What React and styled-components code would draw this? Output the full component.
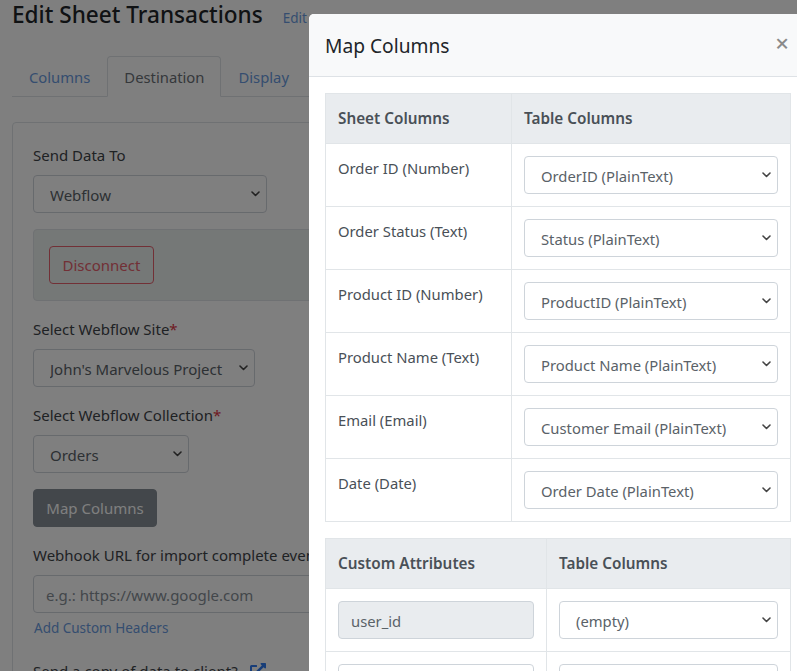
import React from "react";
import styled, { createGlobalStyle } from "styled-components";
import { FaExternalLinkAlt } from "react-icons/fa";

const chevron =
  "url(\"data:image/svg+xml,%3Csvg xmlns='http://www.w3.org/2000/svg' width='9' height='6' viewBox='0 0 9 6'%3E%3Cpath d='M1 1l3.5 3.5L8 1' fill='none' stroke='%23444' stroke-width='1.6' stroke-linecap='round' stroke-linejoin='round'/%3E%3C/svg%3E\")";

const GlobalStyle = createGlobalStyle`
  html, body {
    margin: 0;
    height: 100%;
    overflow: hidden;
    background: #fff;
  }
  body {
    font-family: "Noto Sans", "Open Sans", sans-serif;
    font-size: 15px;
    line-height: 24px;
    color: #3f4449;
  }
`;

const Page = styled.div`
  padding: 0 0 0 12px;
  width: 1100px;
`;

const TitleRow = styled.div`
  display: flex;
  align-items: baseline;
  gap: 20px;
  height: 29px;
`;

const Title = styled.h1`
  margin: 0;
  font-size: 22.6px;
  line-height: 29px;
  font-weight: 500;
  color: #212529;
`;

const SmallLink = styled.a`
  font-size: 13.5px;
  color: #6a9be0;
`;

const Tabs = styled.ul`
  display: flex;
  list-style: none;
  margin: 27px 0 25px;
  padding: 0;
  height: 41px;
  font-size: 14.8px;
  border-bottom: 1px solid #dee2e6;
  box-sizing: border-box;
`;

const Tab = styled.li`
  box-sizing: border-box;
  height: 41px;
  padding: 8px 16px;
  color: ${(p) => (p.$active ? "#6b7177" : "#6a9be0")};
  background: ${(p) => (p.$active ? "#fff" : "transparent")};
  border: 1px solid ${(p) => (p.$active ? "#dee2e6" : "transparent")};
  border-bottom-color: ${(p) => (p.$active ? "#fff" : "transparent")};
  border-radius: 4px 4px 0 0;
`;

const Card = styled.div`
  border: 1px solid #dee2e6;
  border-radius: 4px;
  padding: 21px 20px;
  display: flex;
  flex-direction: column;
  align-items: flex-start;
`;

const Label = styled.div`
  height: 24px;
  margin: ${(p) => p.$top || 0}px 0 7px;
  line-height: 22px;
  white-space: nowrap;
`;

const Required = styled.span`
  color: #dc3545;
`;

const Select = styled.select`
  appearance: none;
  box-sizing: border-box;
  display: block;
  width: ${(p) => (p.$width ? `${p.$width}px` : "100%")};
  height: 38px;
  padding: 2px 24px 0 16px;
  font: inherit;
  color: #5a6268;
  background: #fff ${chevron} no-repeat right 6px center;
  border: 1px solid #ced4da;
  border-radius: 4px;
`;

const Alert = styled.div`
  box-sizing: border-box;
  width: 800px;
  height: 72px;
  margin-top: 16px;
  padding: 16px 15px;
  background: #ebf0ee;
  border: 1px solid #dee2e6;
  border-radius: 4px;
`;

const OutlineButton = styled.button`
  box-sizing: border-box;
  height: 38px;
  width: 105px;
  padding: 0;
  font: inherit;
  color: #e4606d;
  background: transparent;
  border: 1px solid #e4606d;
  border-radius: 4px;
`;

const DarkButton = styled.button`
  box-sizing: border-box;
  height: 38px;
  width: 124px;
  margin-top: 16px;
  padding: 0;
  font: inherit;
  color: #fff;
  background: #868e96;
  border: 1px solid #868e96;
  border-radius: 4px;
`;

const Input = styled.input`
  box-sizing: border-box;
  display: block;
  width: ${(p) => (p.$width ? `${p.$width}px` : "100%")};
  height: 38px;
  padding: 1px 12px 0;
  font: inherit;
  color: #5a6268;
  background: ${(p) => (p.disabled ? "#e9ecef" : "#fff")};
  border: 1px solid #ced4da;
  border-radius: 4px;

  &::placeholder {
    color: #868e96;
  }
`;

const AddHeaders = styled(SmallLink)`
  display: block;
  margin: 4px 0 0 1px;
  line-height: 22px;
`;

const ClientRow = styled.div`
  display: flex;
  align-items: center;
  gap: 12px;
  margin-top: 20px;
  white-space: nowrap;
`;

const ClientIcon = styled(FaExternalLinkAlt)`
  color: #2f7bf0;
  width: 16px;
  height: 16px;
`;

const Backdrop = styled.div`
  position: fixed;
  inset: 0;
  background: rgba(0, 0, 0, 0.5);
`;

const Modal = styled.div`
  position: fixed;
  top: 14px;
  left: 309px;
  width: 498px;
  background: #fff;
  border-radius: 5px;
`;

const ModalHeader = styled.div`
  box-sizing: border-box;
  display: flex;
  justify-content: space-between;
  align-items: center;
  height: 63px;
  padding: 0 18px 0 16px;
  background: #f8f9fa;
  border-bottom: 1px solid #dee2e6;
  border-radius: 5px 5px 0 0;
`;

const ModalTitle = styled.h2`
  margin: 0;
  padding-top: 2px;
  font-size: 19.2px;
  font-weight: 400;
  line-height: 28px;
  color: #212529;
`;

const Close = styled.span`
  font-size: 24px;
  line-height: 22px;
  font-weight: 500;
  color: #8a8a8a;
  margin-top: -4px;
`;

const ModalBody = styled.div`
  padding: 16px 16px 16px;
  font-size: 14.8px;
`;

const Table = styled.table`
  width: 466px;
  table-layout: fixed;
  border-collapse: collapse;
  margin-bottom: 16px;
`;

const HeadCell = styled.th`
  box-sizing: border-box;
  height: 50px;
  width: ${(p) => (p.$width ? `${p.$width}px` : "auto")};
  padding: 11px 12px 13px;
  text-align: left;
  font-weight: 600;
  font-size: 15.3px;
  color: #495057;
  background: #e9ecef;
  border: 1px solid #e1e5e8;
`;

const Cell = styled.td`
  box-sizing: border-box;
  height: 63px;
  padding: 12px;
  vertical-align: top;
  color: #495057;
  border: 1px solid #e1e5e8;
  white-space: nowrap;
`;

const sheetRows = [
  ["Order ID (Number)", "OrderID (PlainText)"],
  ["Order Status (Text)", "Status (PlainText)"],
  ["Product ID (Number)", "ProductID (PlainText)"],
  ["Product Name (Text)", "Product Name (PlainText)"],
  ["Email (Email)", "Customer Email (PlainText)"],
  ["Date (Date)", "Order Date (PlainText)"],
];

const Choice = ({ value, width }) => (
  <Select $width={width} defaultValue={value}>
    <option>{value}</option>
  </Select>
);

export default function App() {
  return (
    <>
      <GlobalStyle />
      <Page>
        <TitleRow>
          <Title>Edit Sheet Transactions</Title>
          <SmallLink>Edit</SmallLink>
        </TitleRow>
        <Tabs>
          <Tab>Columns</Tab>
          <Tab $active>Destination</Tab>
          <Tab>Display</Tab>
        </Tabs>
        <Card>
          <Label>Send Data To</Label>
          <Choice value="Webflow" width={234} />
          <Alert>
            <OutlineButton>Disconnect</OutlineButton>
          </Alert>
          <Label $top={17}>
            Select Webflow Site<Required>*</Required>
          </Label>
          <Choice value="John's Marvelous Project" width={222} />
          <Label $top={17}>
            Select Webflow Collection<Required>*</Required>
          </Label>
          <Choice value="Orders" width={156} />
          <DarkButton>Map Columns</DarkButton>
          <Label $top={17}>Webhook URL for import complete events</Label>
          <Input placeholder="e.g.: https://www.google.com" $width={800} />
          <AddHeaders>Add Custom Headers</AddHeaders>
          <ClientRow>
            Send a copy of data to client?
            <ClientIcon />
          </ClientRow>
        </Card>
      </Page>
      <Backdrop />
      <Modal>
        <ModalHeader>
          <ModalTitle>Map Columns</ModalTitle>
          <Close>×</Close>
        </ModalHeader>
        <ModalBody>
          <Table>
            <thead>
              <tr>
                <HeadCell $width={186}>Sheet Columns</HeadCell>
                <HeadCell>Table Columns</HeadCell>
              </tr>
            </thead>
            <tbody>
              {sheetRows.map(([sheet, column]) => (
                <tr key={sheet}>
                  <Cell>{sheet}</Cell>
                  <Cell>
                    <Choice value={column} />
                  </Cell>
                </tr>
              ))}
            </tbody>
          </Table>
          <Table>
            <thead>
              <tr>
                <HeadCell $width={221}>Custom Attributes</HeadCell>
                <HeadCell>Table Columns</HeadCell>
              </tr>
            </thead>
            <tbody>
              <tr>
                <Cell>
                  <Input disabled value="user_id" readOnly />
                </Cell>
                <Cell>
                  <Choice value="(empty)" />
                </Cell>
              </tr>
              <tr>
                <Cell>
                  <Input />
                </Cell>
                <Cell>
                  <Choice value="(empty)" />
                </Cell>
              </tr>
            </tbody>
          </Table>
        </ModalBody>
      </Modal>
    </>
  );
}
